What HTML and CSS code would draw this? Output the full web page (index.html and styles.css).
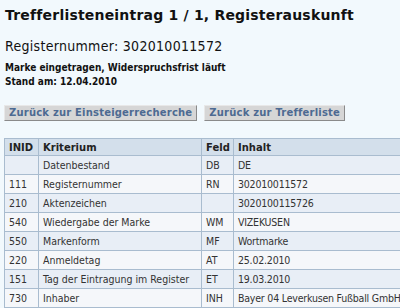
FILE: index.html
```html
<!DOCTYPE html>
<html lang="de">
<head>
    <meta charset="UTF-8">
    <title>Registerauskunft</title>
    <link rel="stylesheet" href="styles.css">
</head>
<body>
    <h1>Trefferlisteneintrag 1 / 1, Registerauskunft</h1>
    <h2>Registernummer: 302010011572</h2>
    <p class="status">Marke eingetragen, Widerspruchsfrist läuft<br>Stand am: 12.04.2010</p>
    <div class="buttons">
        <button type="button">Zurück zur Einsteigerrecherche</button>
        <button type="button">Zurück zur Trefferliste</button>
    </div>
    <table class="result">
        <colgroup>
            <col class="c-inid"><col class="c-krit"><col class="c-feld"><col class="c-inhalt">
        </colgroup>
        <thead>
            <tr><th>INID</th><th>Kriterium</th><th>Feld</th><th>Inhalt</th></tr>
        </thead>
        <tbody>
            <tr><td></td><td>Datenbestand</td><td>DB</td><td class="inhalt">DE</td></tr>
            <tr><td>111</td><td>Registernummer</td><td>RN</td><td class="inhalt">302010011572</td></tr>
            <tr><td>210</td><td>Aktenzeichen</td><td></td><td class="inhalt">3020100115726</td></tr>
            <tr><td>540</td><td>Wiedergabe der Marke</td><td>WM</td><td class="inhalt">VIZEKUSEN</td></tr>
            <tr><td>550</td><td>Markenform</td><td>MF</td><td class="inhalt">Wortmarke</td></tr>
            <tr><td>220</td><td>Anmeldetag</td><td>AT</td><td class="inhalt">25.02.2010</td></tr>
            <tr><td>151</td><td>Tag der Eintragung im Register</td><td>ET</td><td class="inhalt">19.03.2010</td></tr>
            <tr><td>730</td><td>Inhaber</td><td>INH</td><td class="inhalt">Bayer 04 Leverkusen Fußball GmbH,</td></tr>
        </tbody>
    </table>
</body>
</html>
```

FILE: styles.css
```css
html { background: #f2f9fd; }
body { margin: 0; padding: 5px 0 0 5px; font-family: "DejaVu Sans", Verdana, sans-serif; color: #111; overflow: hidden; height: 303px; }
h1 { font-size: 14px; font-weight: bold; margin: 2px 0 0 0; letter-spacing: 0.2px; }
h2 { font-family: "DejaVu Sans Condensed", "DejaVu Sans", sans-serif; font-size: 14px; font-weight: normal; letter-spacing: 0.3px; margin: 15px 0 0 0; }
.status { font-family: "DejaVu Sans Condensed", "DejaVu Sans", sans-serif; font-size: 10px; font-weight: bold; line-height: 14px; margin: 7px 0 0 0; }
.buttons { display: flex; gap: 7px; margin: 16px 0 0 -1px; }
button { font-family: inherit; font-size: 10px; font-weight: bold; color: #4d6a92; letter-spacing: 0.2px; background: #d6d6d6; border: 1px solid; border-color: #e8e8e8 #8a8a8a #8a8a8a #e8e8e8; padding: 1px 4px 2px; white-space: nowrap; }
.result { border-collapse: collapse; table-layout: fixed; margin: 17px 0 0 -1px; font-family: "DejaVu Sans Condensed", "DejaVu Sans", sans-serif; font-size: 10.5px; width: 430px; }
.result th, .result td { border: 1px solid #a9bccf; text-align: left; padding: 0 4px; height: 18px; white-space: nowrap; overflow: hidden; }
.result th { background: #d3dfeb; font-family: "DejaVu Sans", sans-serif; font-size: 10px; font-weight: bold; color: #222; height: 16px; }
.result td { color: #333; }
.result td.inhalt { letter-spacing: -0.2px; overflow: visible; }
.result tbody tr:nth-child(odd) { background: #e8eef6; }
.result tbody tr:nth-child(even) { background: #f5f7fa; }
.c-inid { width: 34px; }
.c-krit { width: 163px; }
.c-feld { width: 32px; }
```
